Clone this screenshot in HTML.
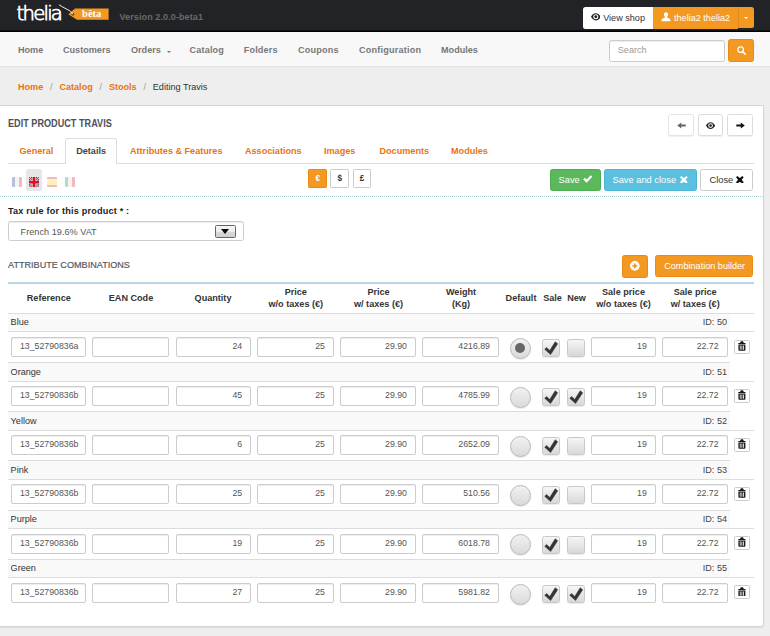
<!DOCTYPE html>
<html lang="en">
<head>
<meta charset="utf-8">
<title>Thelia - Edit product Travis</title>
<style>
*{box-sizing:border-box}
html,body{margin:0;padding:0}
body{width:770px;height:636px;overflow:hidden;background:#eee;font-family:"Liberation Sans",Arial,sans-serif;font-size:9.1px;color:#333;position:relative}
a{color:#e9730f;text-decoration:none}
svg{display:block}
/* top bar */
#topbar{position:absolute;left:0;top:0;width:770px;height:32px;background:linear-gradient(#222326 0,#222326 30.2px,#000 30.8px,#000 31.6px,#f8f8f8 32px)}
#logo{position:absolute;left:16px;top:2px;font-family:"DejaVu Sans","Liberation Sans",sans-serif;font-weight:200;font-size:18.5px;letter-spacing:-0.9px;color:#fff;line-height:20px;white-space:nowrap}
#tag{position:absolute;left:64px;top:4px;width:48px;height:18px}
#beta{position:absolute;left:82px;top:9px;width:21px;height:10.5px;font-family:"Liberation Serif",serif;font-weight:bold;font-size:9.5px;line-height:10px;color:#fff;text-align:center}
#version{position:absolute;left:119.5px;top:11.5px;font-size:9.1px;line-height:11px;font-weight:bold;color:#686a6e;white-space:nowrap;letter-spacing:.06px}
.tbtn{position:absolute;top:6.6px;height:22px;font-size:9.1px;line-height:22px;white-space:nowrap}
#viewshop{left:583px;width:69.8px;background:#fff;border-radius:2.5px 0 0 2.5px;color:#333}
#viewshop svg{position:absolute;left:7.6px;top:5.4px;width:9.6px;height:9.6px}
#viewshop span{position:absolute;left:20.2px;top:0}
#user{left:652.8px;width:85.4px;height:22.6px;background:#f39922;color:#fff}
#user svg{position:absolute;left:8.2px;top:5.6px;width:10px;height:9.6px}
#user span{position:absolute;left:21.2px;top:0}
#usercaret{left:738.2px;width:16.2px;height:21.6px;background:#f39922;border-left:1px solid #e08a17;border-radius:0 2.5px 2.5px 0}
#usercaret:after{content:"";position:absolute;left:4.6px;top:10px;border:2.5px solid transparent;border-top:2.5px solid #fff;border-bottom:0}
/* navbar */
#navbar{position:absolute;left:0;top:32px;width:770px;height:35px;background:#f8f8f8;border-bottom:1px solid #e4e4e4}
#navbar span{position:absolute;top:12.8px;font-size:9.1px;line-height:11px;font-weight:bold;color:#777;white-space:nowrap}
#navbar i{position:absolute;left:167.3px;top:18.8px;border:2px solid transparent;border-top:2px solid #777;border-bottom:0}
#search{position:absolute;left:609.2px;top:40.3px;width:115.4px;height:21.4px;border:1px solid #ccc;border-radius:2.5px;background:#fff;font-size:9.1px;color:#999;line-height:19.4px;padding-left:7.6px;box-shadow:inset 0 1px 1px rgba(0,0,0,.075)}
#searchbtn{position:absolute;left:728px;top:39.2px;width:26.4px;height:22.5px;background:#f39922;border:1px solid #e78c12;border-radius:2.5px}
#searchbtn svg{position:absolute;left:8px;top:6.2px;width:9px;height:9px}
#crumb{position:absolute;left:18px;top:81.2px;font-size:9.1px;line-height:12px;font-weight:bold;white-space:nowrap;color:#333}
#crumb .sep{color:#999;font-weight:normal;padding:0 6.8px}
#crumb .cur{font-weight:normal;color:#333}
/* panel */
#panel{position:absolute;left:-1px;top:105px;width:764.6px;height:522.3px;background:#fff;border:1px solid #d4d4d4;border-radius:0 0 3px 0;box-shadow:0 1px 1px rgba(0,0,0,.08)}
#main{position:absolute;left:0;top:0;width:770px;height:636px}
#title{position:absolute;left:8px;top:118.4px;transform:scaleY(1.1);transform-origin:50% 60%;font-size:9.1px;line-height:12px;font-weight:bold;color:#4c505a;white-space:nowrap;letter-spacing:0.02px}
.nbtn{position:absolute;top:114.2px;width:25.6px;height:21.5px;background:#fff;border:1px solid #dcdcdc;border-radius:2.5px;box-shadow:0 1px 1px rgba(0,0,0,.06)}
.nbtn svg{position:absolute;left:7.7px;top:5.9px;width:9.1px;height:9.1px}
#tabline{position:absolute;left:8px;top:163px;width:746px;height:1px;background:#ddd}
.tab{position:absolute;top:145.5px;font-size:9.1px;line-height:11px;font-weight:bold;color:#e9730f;white-space:nowrap}
#tabact{position:absolute;left:65.2px;top:137.5px;width:51.8px;height:26.5px;border:1px solid #ddd;border-bottom:0;border-radius:3px 3px 0 0;background:#fff}
#tabact span{position:absolute;left:0;width:100%;text-align:center;top:7px;font-size:9.1px;line-height:11px;font-weight:bold;color:#444}
.flag{position:absolute;top:176.5px;width:10px;height:10.5px;border-radius:1px;opacity:.32;overflow:hidden}
#flagbg{position:absolute;left:26px;top:168.9px;width:15.6px;height:22.3px;background:#e6e6e6;border-radius:2.5px}
.cur{}
.cbtn{position:absolute;top:169.1px;width:18.8px;height:19px;border:1px solid #ccc;border-radius:1.2px;background:#fff;font-size:8.2px;font-weight:bold;line-height:17.6px;text-align:center;color:#333}
.cbtn.on{background:#f39922;border-color:#e78c12;color:#fff}
.abtn{position:absolute;top:169.2px;height:22px;border-radius:2.5px;font-size:9.3px;line-height:20px;white-space:nowrap;color:#fff;border:1px solid transparent}
.abtn span{position:absolute;top:0}
.abtn svg{position:absolute}
#save{left:550.2px;width:50.5px;background:#5cb85c;border-color:#4cae4c}
#saveclose{left:604.2px;width:92.8px;background:#5bc0de;border-color:#46b8da}
#close{left:700.4px;width:52.4px;background:#fff;border-color:#ccc;color:#333}
#dots{position:absolute;left:0;top:196px;width:763.6px;height:1px;background-image:linear-gradient(90deg,#a9d3d6 50%,rgba(255,255,255,0) 50%);background-size:2px 1px}
#taxlabel{position:absolute;left:8px;top:205.4px;font-size:9.1px;line-height:12px;font-weight:bold;color:#222;white-space:nowrap;letter-spacing:0.2px}
#select{position:absolute;left:8px;top:220.8px;width:235.7px;height:20.4px;border:1px solid #ccc;border-radius:2.5px;background:#fff;box-shadow:inset 0 1px 1px rgba(0,0,0,.075)}
#select span{position:absolute;left:11.6px;top:1.2px;line-height:19.5px;font-size:9.1px;color:#555;white-space:nowrap;letter-spacing:0.04px}
#selbtn{position:absolute;left:206px;top:3px;width:21px;height:13px;border:1px solid #666;border-radius:1.5px;background:linear-gradient(#f7f7f7 0,#ececec 50%,#dadada 50%,#d0d0d0 100%)}
#selbtn:after{content:"";position:absolute;left:4.8px;top:3px;border:4.8px solid transparent;border-top:5.2px solid #0a0a0a;border-bottom:0}
#attrtitle{position:absolute;left:8px;top:259px;font-size:9.1px;line-height:12px;color:#555a64;-webkit-text-stroke:0.2px #555a64;white-space:nowrap}
.obtn{position:absolute;top:254.8px;height:22px;background:#f39922;border:1px solid #e78c12;border-radius:2.5px;color:#fff;font-size:9.1px;line-height:20px;text-align:center;white-space:nowrap}
/* table */
#tbl{position:absolute;left:8px;top:282.6px;width:745.6px;height:330px}
#tbltop{position:absolute;left:0;top:-0.6px;width:745.6px;height:3px;background:linear-gradient(rgba(178,211,225,0) 0,#b2d3e1 0.6px,#b2d3e1 1.7px,rgba(178,211,225,0) 2.3px)}
#thb{position:absolute;left:0;top:30.4px;width:745.6px;height:1px;background:#ddd}
.th{position:absolute;font-size:9.1px;line-height:12.4px;font-weight:bold;color:#333;text-align:center;white-space:nowrap;transform:translateX(-50%)}
.lrow{position:absolute;left:8px;width:722px;height:18.5px;background:#f9f9f9;border-top:1px solid #ddd}
.lrow .ln{position:absolute;left:2.6px;top:2.5px;line-height:12px;font-size:9.1px;color:#333}
.lrow .lid{position:absolute;right:3px;top:2.5px;line-height:12px;font-size:9.1px;color:#444}
.irow{position:absolute;left:8px;width:745.6px;height:30.4px;border-top:1px solid #ddd}
.inp{position:absolute;top:4.6px;height:20px;border:1px solid #ccc;border-radius:2px;background:#fff;font-size:8.75px;line-height:17.6px;color:#555;text-align:right;padding-right:8px;white-space:nowrap;box-shadow:inset 0 1px 1px rgba(0,0,0,.075)}
.inp.c{text-align:left;padding-left:7.8px;padding-right:0}
.radio{position:absolute;left:501.7px;top:5.4px;width:21px;height:21px;border-radius:50%;border:1px solid #b8b8b8;background:linear-gradient(#f1f1f1,#dadada);box-shadow:0 1px 1px rgba(0,0,0,.1)}
.radio.on:after{content:"";position:absolute;left:4.5px;top:4.5px;width:10px;height:10px;border-radius:50%;background:#666}
.cb{position:absolute;top:6.6px;width:18.2px;height:18px;border-radius:2.5px;border:1px solid #c8c8c8;background:linear-gradient(#f6f6f6,#d8d8d8);box-shadow:0 1px 1px rgba(0,0,0,.08)}
.cb .ck{position:absolute;left:0;top:0;width:16.2px;height:16px}
.trash{position:absolute;left:725.8px;top:7.3px;width:16.2px;height:14px;border:1px solid #ccc;border-radius:1.5px;background:#fff}
.trash .tr{position:absolute;left:3.2px;top:0.2px;width:7.8px;height:9.8px}
</style>
</head>
<body>
<div id="topbar">
  <svg id="brand" viewBox="0 0 120 32" width="120" height="32" style="position:absolute;left:0;top:0">
    <text x="16.600" y="20.400" font-family="'DejaVu Sans','Liberation Sans',sans-serif" font-weight="200" font-size="19.700" fill="#fff" stroke="#fff" stroke-width="0.750" textLength="46.300" lengthAdjust="spacing">thelia</text>
    <path d="M75 8.600H108.600V19.700H77L68.300 14.300Z" fill="#f39922"/>
    <circle cx="72.900" cy="14.300" r="1.300" fill="#212224"/>
    <path d="M72.900 14.300C71.500 11.500 69.500 10.500 67 9.300C64 8 62 6.500 59.300 5" stroke="#fff" stroke-width="0.900" fill="none" stroke-linecap="round"/>
    <text x="82.100" y="16.900" font-family="'Liberation Serif',serif" font-weight="bold" font-size="10.500" fill="#fff">bêta</text>
  </svg>
  <div id="version">Version 2.0.0-beta1</div>
  <div class="tbtn" id="viewshop"><svg viewBox="0 0 16 16"><path d="M8 2C4.400 2 1.400 4.800 0 8c1.400 3.200 4.400 6 8 6s6.600-2.800 8-6c-1.400-3.200-4.400-6-8-6zm0 10.200A4.200 4.200 0 1 1 8 3.800a4.200 4.200 0 0 1 0 8.400zM8 5.600a2.400 2.400 0 1 0 0 4.800 2.400 2.400 0 0 0 0-4.800z" fill="#222" fill-rule="evenodd"/></svg><span>View shop</span></div>
  <div class="tbtn" id="user"><svg viewBox="0 0 16 16" preserveAspectRatio="none"><path d="M8 0.500c2 0 3.300 1.600 3.300 3.700 0 1.500-.6 3-1.600 3.800v1c2.500.8 5.300 1.800 5.300 4v2.500H1V13c0-2.200 2.800-3.200 5.300-4V8C5.300 7.200 4.700 5.700 4.700 4.200 4.700 2.100 6 .5 8 .5z" fill="#fff"/></svg><span>thelia2 thelia2</span></div>
  <div class="tbtn" id="usercaret"></div>
</div>
<div id="navbar">
  <span style="left:18px">Home</span>
  <span style="left:63px">Customers</span>
  <span style="left:131px">Orders</span><i></i>
  <span style="left:189.5px;letter-spacing:.17px">Catalog</span>
  <span style="left:243.7px;letter-spacing:.18px">Folders</span>
  <span style="left:298px;letter-spacing:.18px">Coupons</span>
  <span style="left:359px;letter-spacing:.21px">Configuration</span>
  <span style="left:441px">Modules</span>
</div>
<div id="search">Search</div>
<div id="searchbtn"><svg viewBox="0 0 16 16"><circle cx="6.500" cy="6.500" r="4.900" stroke="#fff" stroke-width="2.300" fill="none"/><path d="M10 10l4.600 4.600" stroke="#fff" stroke-width="3" stroke-linecap="round"/></svg></div>
<div id="crumb"><a>Home</a><span class="sep">/</span><a>Catalog</a><span class="sep">/</span><a>Stools</a><span class="sep">/</span><span class="cur">Editing Travis</span></div>
<div id="panel"></div>
<div id="main">
  <div id="title">EDIT PRODUCT TRAVIS</div>
  <div class="nbtn" style="left:668.2px;border-color:#e4e4e4"><svg viewBox="0 0 16 16"><path d="M15.500 6.300H7.600V2.600L0.500 8 7.600 13.400V9.700h7.900z" fill="#666"/></svg></div>
  <div class="nbtn" style="left:697.5px"><svg viewBox="0 0 16 16"><path d="M8 2C4.400 2 1.400 4.800 0 8c1.400 3.200 4.400 6 8 6s6.600-2.800 8-6c-1.400-3.200-4.400-6-8-6zm0 10.200A4.200 4.200 0 1 1 8 3.800a4.200 4.200 0 0 1 0 8.400zM8 5.600a2.400 2.400 0 1 0 0 4.800 2.400 2.400 0 0 0 0-4.800z" fill="#222" fill-rule="evenodd"/></svg></div>
  <div class="nbtn" style="left:727px"><svg viewBox="0 0 16 16"><path d="M0.500 6.300h7.900V2.600L15.500 8 8.400 13.400V9.700H0.500z" fill="#111"/></svg></div>

  <div id="tabline"></div>
  <span class="tab" style="left:19.5px">General</span>
  <div id="tabact"><span>Details</span></div>
  <span class="tab" style="left:130px">Attributes &amp; Features</span>
  <span class="tab" style="left:245px">Associations</span>
  <span class="tab" style="left:324px">Images</span>
  <span class="tab" style="left:379.5px">Documents</span>
  <span class="tab" style="left:451px">Modules</span>

  <div class="flag" style="left:11.5px;background:linear-gradient(90deg,#1c3a94 33%,#ddd 33%,#ddd 66%,#d8232a 66%)"></div>
  <div id="flagbg"></div>
  <div class="flag" style="left:29.3px;opacity:1"><svg viewBox="0 0 20 21" width="10" height="10.500"><rect width="20" height="21" fill="#21409a"/><path d="M0 0L20 21M20 0L0 21" stroke="#f3dede" stroke-width="4"/><path d="M0 0L20 21M20 0L0 21" stroke="#d8121e" stroke-width="1.800"/><path d="M10 0v21M0 10.500h20" stroke="#f3dede" stroke-width="7.500"/><path d="M10 0v21M0 10.500h20" stroke="#d8121e" stroke-width="5.200"/></svg></div>
  <div class="flag" style="left:47px;background:linear-gradient(#d8232a 19%,#f7d22e 19%,#f7d22e 81%,#d8232a 81%)"></div>
  <div class="flag" style="left:64.5px;background:linear-gradient(90deg,#1a9246 33%,#ddd 33%,#ddd 66%,#d8232a 66%)"></div>

  <div class="cbtn on" style="left:308.3px">€</div>
  <div class="cbtn" style="left:330.2px;width:19.2px">$</div>
  <div class="cbtn" style="left:352.8px;width:18.4px">£</div>

  <div class="abtn" id="save"><span style="left:7.400px">Save</span><svg style="left:32.200px;top:5px;width:9.600px;height:8px" viewBox="0 0 14 11.600"><path d="M0.300 6.400L2.600 4 5.300 6.600 11.300 0.300l2.400 2.300-8.400 8.800z" fill="#fff"/></svg></div>
  <div class="abtn" id="saveclose"><span style="left:7.300px">Save and close</span><svg style="left:74.800px;top:5.400px;width:7.700px;height:7.700px" viewBox="0 0 14 14"><path d="M2.400 0L7 3.700 11.600 0 14 2.400 10.300 7 14 11.600 11.600 14 7 10.300 2.400 14 0 11.600 3.700 7 0 2.400z" fill="#fff"/></svg></div>
  <div class="abtn" id="close"><span style="left:8.100px">Close</span><svg style="left:34.600px;top:5.400px;width:7.700px;height:7.700px" viewBox="0 0 14 14"><path d="M2.400 0L7 3.700 11.600 0 14 2.400 10.300 7 14 11.600 11.600 14 7 10.300 2.400 14 0 11.600 3.700 7 0 2.400z" fill="#111"/></svg></div>

  <div id="dots"></div>
  <div id="taxlabel">Tax rule for this product * :</div>
  <div id="select"><span>French 19.6% VAT</span><div id="selbtn"></div></div>
  <div id="attrtitle">ATTRIBUTE COMBINATIONS</div>
  <div class="obtn" style="left:621.8px;width:26.5px;height:22.8px"><svg style="position:absolute;left:7.700px;top:5.600px;width:9.700px;height:9.700px" viewBox="0 0 16 16"><path d="M8 0a8 8 0 1 0 0 16A8 8 0 0 0 8 0zm1.500 4v2.500H12v3H9.500V12h-3V9.500H4v-3h2.500V4z" fill="#fff" fill-rule="evenodd"/></svg></div>
  <div class="obtn" style="left:655px;width:98px;padding-left:1.4px">Combination builder</div>

  <div id="tbl">
    <div id="tbltop"></div><div id="thb"></div>
    <div class="th" style="left:40.800px;top:9.500px">Reference</div>
    <div class="th" style="left:123px;top:9.500px">EAN Code</div>
    <div class="th" style="left:205px;top:9.500px">Quantity</div>
    <div class="th" style="left:287.800px;top:3.300px">Price<br>w/o taxes (€)</div>
    <div class="th" style="left:370.500px;top:3.300px">Price<br>w/ taxes (€)</div>
    <div class="th" style="left:453px;top:3.300px">Weight<br>(Kg)</div>
    <div class="th" style="left:513px;top:9.500px">Default</div>
    <div class="th" style="left:544.500px;top:9.500px">Sale</div>
    <div class="th" style="left:568.600px;top:9.500px">New</div>
    <div class="th" style="left:615.500px;top:3.300px">Sale price<br>w/o taxes (€)</div>
    <div class="th" style="left:687.200px;top:3.300px">Sale price<br>w/ taxes (€)</div>
  </div>
<div class="lrow" style="top:312.90px"><span class="ln">Blue</span><span class="lid">ID: 50</span></div>
<div class="irow" style="top:331.40px">
<div class="inp c" style="left:3.2px;width:74.8px">13_52790836a</div>
<div class="inp " style="left:84.4px;width:76.8px"></div>
<div class="inp " style="left:167.7px;width:75.5px">24</div>
<div class="inp " style="left:249.4px;width:76.6px">25</div>
<div class="inp " style="left:332.4px;width:75.6px">29.90</div>
<div class="inp " style="left:414.2px;width:76.8px">4216.89</div>
<div class="radio on"></div>
<div class="cb" style="left:534.2px"><svg class="ck" viewBox="0 0 16.2 16"><path d="M1.700 9.300L3.600 7.500L6.800 10.500L12.200 1.700L14.700 3.800L7.600 14.600Z" fill="#333" stroke="#333" stroke-width="0.500" stroke-linejoin="round"/></svg></div>
<div class="cb" style="left:559.2px"></div>
<div class="inp " style="left:583.1px;width:64.7px">19</div>
<div class="inp " style="left:654.0px;width:65.6px">22.72</div>
<div class="trash"><svg class="tr" viewBox="0 0 7.8 9.8"><path d="M1.900 2.100L2.900 0.300H4.900L5.900 2.100Z M0.300 2.100H7.500V3.100H0.300Z M0.400 3.500H7.400V9Q7.400 9.800 6.600 9.800H1.200Q0.400 9.800 0.400 9Z M1.800 4.500V8.700H2.600V4.500Z M3.500 4.500V8.700H4.300V4.500Z M5.200 4.500V8.700H6V4.500Z" fill="#1a1a1a" fill-rule="evenodd"/></svg></div>
</div>
<div class="lrow" style="top:362.05px"><span class="ln">Orange</span><span class="lid">ID: 51</span></div>
<div class="irow" style="top:380.55px">
<div class="inp c" style="left:3.2px;width:74.8px">13_52790836b</div>
<div class="inp " style="left:84.4px;width:76.8px"></div>
<div class="inp " style="left:167.7px;width:75.5px">45</div>
<div class="inp " style="left:249.4px;width:76.6px">25</div>
<div class="inp " style="left:332.4px;width:75.6px">29.90</div>
<div class="inp " style="left:414.2px;width:76.8px">4785.99</div>
<div class="radio"></div>
<div class="cb" style="left:534.2px"><svg class="ck" viewBox="0 0 16.2 16"><path d="M1.700 9.300L3.600 7.500L6.800 10.500L12.200 1.700L14.700 3.800L7.600 14.600Z" fill="#333" stroke="#333" stroke-width="0.500" stroke-linejoin="round"/></svg></div>
<div class="cb" style="left:559.2px"><svg class="ck" viewBox="0 0 16.2 16"><path d="M1.700 9.300L3.600 7.500L6.800 10.500L12.200 1.700L14.700 3.800L7.600 14.600Z" fill="#333" stroke="#333" stroke-width="0.500" stroke-linejoin="round"/></svg></div>
<div class="inp " style="left:583.1px;width:64.7px">19</div>
<div class="inp " style="left:654.0px;width:65.6px">22.72</div>
<div class="trash"><svg class="tr" viewBox="0 0 7.8 9.8"><path d="M1.900 2.100L2.900 0.300H4.900L5.900 2.100Z M0.300 2.100H7.500V3.100H0.300Z M0.400 3.500H7.400V9Q7.400 9.800 6.600 9.800H1.200Q0.400 9.800 0.400 9Z M1.800 4.500V8.700H2.600V4.500Z M3.500 4.500V8.700H4.300V4.500Z M5.200 4.500V8.700H6V4.500Z" fill="#1a1a1a" fill-rule="evenodd"/></svg></div>
</div>
<div class="lrow" style="top:411.20px"><span class="ln">Yellow</span><span class="lid">ID: 52</span></div>
<div class="irow" style="top:429.70px">
<div class="inp c" style="left:3.2px;width:74.8px">13_52790836b</div>
<div class="inp " style="left:84.4px;width:76.8px"></div>
<div class="inp " style="left:167.7px;width:75.5px">6</div>
<div class="inp " style="left:249.4px;width:76.6px">25</div>
<div class="inp " style="left:332.4px;width:75.6px">29.90</div>
<div class="inp " style="left:414.2px;width:76.8px">2652.09</div>
<div class="radio"></div>
<div class="cb" style="left:534.2px"><svg class="ck" viewBox="0 0 16.2 16"><path d="M1.700 9.300L3.600 7.500L6.800 10.500L12.200 1.700L14.700 3.800L7.600 14.600Z" fill="#333" stroke="#333" stroke-width="0.500" stroke-linejoin="round"/></svg></div>
<div class="cb" style="left:559.2px"></div>
<div class="inp " style="left:583.1px;width:64.7px">19</div>
<div class="inp " style="left:654.0px;width:65.6px">22.72</div>
<div class="trash"><svg class="tr" viewBox="0 0 7.8 9.8"><path d="M1.900 2.100L2.900 0.300H4.900L5.900 2.100Z M0.300 2.100H7.500V3.100H0.300Z M0.400 3.500H7.400V9Q7.400 9.800 6.600 9.800H1.200Q0.400 9.800 0.400 9Z M1.800 4.500V8.700H2.600V4.500Z M3.500 4.500V8.700H4.300V4.500Z M5.200 4.500V8.700H6V4.500Z" fill="#1a1a1a" fill-rule="evenodd"/></svg></div>
</div>
<div class="lrow" style="top:460.35px"><span class="ln">Pink</span><span class="lid">ID: 53</span></div>
<div class="irow" style="top:478.85px">
<div class="inp c" style="left:3.2px;width:74.8px">13_52790836b</div>
<div class="inp " style="left:84.4px;width:76.8px"></div>
<div class="inp " style="left:167.7px;width:75.5px">25</div>
<div class="inp " style="left:249.4px;width:76.6px">25</div>
<div class="inp " style="left:332.4px;width:75.6px">29.90</div>
<div class="inp " style="left:414.2px;width:76.8px">510.56</div>
<div class="radio"></div>
<div class="cb" style="left:534.2px"><svg class="ck" viewBox="0 0 16.2 16"><path d="M1.700 9.300L3.600 7.500L6.800 10.500L12.200 1.700L14.700 3.800L7.600 14.600Z" fill="#333" stroke="#333" stroke-width="0.500" stroke-linejoin="round"/></svg></div>
<div class="cb" style="left:559.2px"></div>
<div class="inp " style="left:583.1px;width:64.7px">19</div>
<div class="inp " style="left:654.0px;width:65.6px">22.72</div>
<div class="trash"><svg class="tr" viewBox="0 0 7.8 9.8"><path d="M1.900 2.100L2.900 0.300H4.900L5.900 2.100Z M0.300 2.100H7.500V3.100H0.300Z M0.400 3.500H7.400V9Q7.400 9.800 6.600 9.800H1.200Q0.400 9.800 0.400 9Z M1.800 4.500V8.700H2.600V4.500Z M3.500 4.500V8.700H4.300V4.500Z M5.200 4.500V8.700H6V4.500Z" fill="#1a1a1a" fill-rule="evenodd"/></svg></div>
</div>
<div class="lrow" style="top:509.50px"><span class="ln">Purple</span><span class="lid">ID: 54</span></div>
<div class="irow" style="top:528.00px">
<div class="inp c" style="left:3.2px;width:74.8px">13_52790836b</div>
<div class="inp " style="left:84.4px;width:76.8px"></div>
<div class="inp " style="left:167.7px;width:75.5px">19</div>
<div class="inp " style="left:249.4px;width:76.6px">25</div>
<div class="inp " style="left:332.4px;width:75.6px">29.90</div>
<div class="inp " style="left:414.2px;width:76.8px">6018.78</div>
<div class="radio"></div>
<div class="cb" style="left:534.2px"><svg class="ck" viewBox="0 0 16.2 16"><path d="M1.700 9.300L3.600 7.500L6.800 10.500L12.200 1.700L14.700 3.800L7.600 14.600Z" fill="#333" stroke="#333" stroke-width="0.500" stroke-linejoin="round"/></svg></div>
<div class="cb" style="left:559.2px"></div>
<div class="inp " style="left:583.1px;width:64.7px">19</div>
<div class="inp " style="left:654.0px;width:65.6px">22.72</div>
<div class="trash"><svg class="tr" viewBox="0 0 7.8 9.8"><path d="M1.900 2.100L2.900 0.300H4.900L5.900 2.100Z M0.300 2.100H7.500V3.100H0.300Z M0.400 3.500H7.400V9Q7.400 9.800 6.600 9.800H1.200Q0.400 9.800 0.400 9Z M1.800 4.500V8.700H2.600V4.500Z M3.500 4.500V8.700H4.300V4.500Z M5.200 4.500V8.700H6V4.500Z" fill="#1a1a1a" fill-rule="evenodd"/></svg></div>
</div>
<div class="lrow" style="top:558.65px"><span class="ln">Green</span><span class="lid">ID: 55</span></div>
<div class="irow" style="top:577.15px">
<div class="inp c" style="left:3.2px;width:74.8px">13_52790836b</div>
<div class="inp " style="left:84.4px;width:76.8px"></div>
<div class="inp " style="left:167.7px;width:75.5px">27</div>
<div class="inp " style="left:249.4px;width:76.6px">25</div>
<div class="inp " style="left:332.4px;width:75.6px">29.90</div>
<div class="inp " style="left:414.2px;width:76.8px">5981.82</div>
<div class="radio"></div>
<div class="cb" style="left:534.2px"><svg class="ck" viewBox="0 0 16.2 16"><path d="M1.700 9.300L3.600 7.500L6.800 10.500L12.200 1.700L14.700 3.800L7.600 14.600Z" fill="#333" stroke="#333" stroke-width="0.500" stroke-linejoin="round"/></svg></div>
<div class="cb" style="left:559.2px"><svg class="ck" viewBox="0 0 16.2 16"><path d="M1.700 9.300L3.600 7.500L6.800 10.500L12.200 1.700L14.700 3.800L7.600 14.600Z" fill="#333" stroke="#333" stroke-width="0.500" stroke-linejoin="round"/></svg></div>
<div class="inp " style="left:583.1px;width:64.7px">19</div>
<div class="inp " style="left:654.0px;width:65.6px">22.72</div>
<div class="trash"><svg class="tr" viewBox="0 0 7.8 9.8"><path d="M1.900 2.100L2.900 0.300H4.900L5.900 2.100Z M0.300 2.100H7.500V3.100H0.300Z M0.400 3.500H7.400V9Q7.400 9.800 6.600 9.800H1.200Q0.400 9.800 0.400 9Z M1.800 4.500V8.700H2.600V4.500Z M3.500 4.500V8.700H4.300V4.500Z M5.200 4.500V8.700H6V4.500Z" fill="#1a1a1a" fill-rule="evenodd"/></svg></div>
</div>
</div>
</body>
</html>
